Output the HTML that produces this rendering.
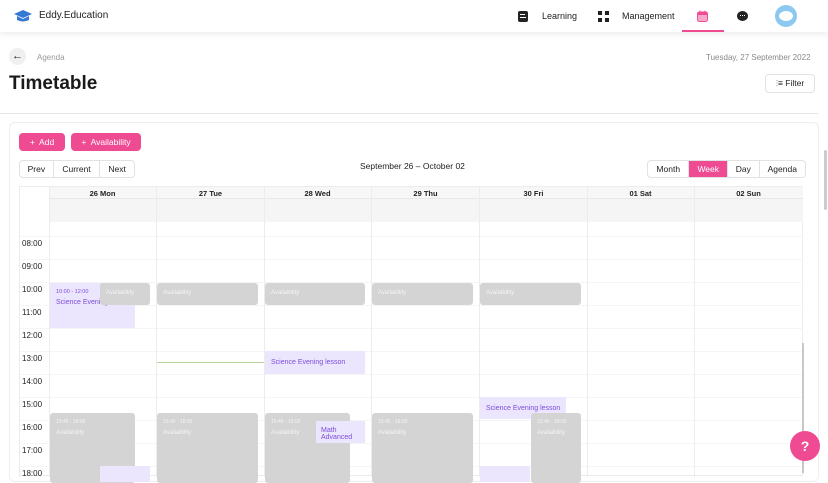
<!DOCTYPE html>
<html><head><style>
*{margin:0;padding:0;box-sizing:border-box}
body{width:828px;height:472px;overflow:hidden;background:#fff;font-family:"Liberation Sans",sans-serif;position:relative;color:#222}
.a{position:absolute}
.nav{left:0;top:0;width:828px;height:32px;background:#fff;box-shadow:0 2px 6px rgba(0,0,0,.08)}
.t{font-size:9px;color:#222}
.btn{background:#ee4b93;color:#fff;font-size:8.5px;border-radius:4px;display:flex;align-items:center;justify-content:center}
.grp{border:1px solid #e2e2e2;border-radius:4px;display:flex;font-size:8.5px;background:#fff}
.grp div{display:flex;align-items:center;justify-content:center;border-right:1px solid #e2e2e2}
.grp div:last-child{border-right:none}
.vl{width:1px;background:#ececec}
.hl{height:1px;background:#f5f5f5;left:20px;width:783px}
.hd{font-size:7.5px;font-weight:bold;text-align:center;top:188px;height:12px;line-height:12px}
.tm{font-size:8px;color:#222;left:22px}
.av{background:#d4d4d4;border-radius:3px;color:#f4f4f4;font-size:6px;padding:7px 6px;white-space:nowrap;overflow:hidden}
.pu{background:#ebe5fd;color:#7c4ddb;font-size:7px;padding:8px 6px;white-space:nowrap;overflow:hidden}
</style></head><body>
<div class="a nav"></div>
<svg class="a" style="left:13px;top:9px" width="20" height="14" viewBox="0 0 20 14"><path d="M10 1 L19 5 L10 9 L1 5Z" fill="#3478d4"/><path d="M4 7 v4 q6 3 12 0 v-4 l-6 3z" fill="#3478d4"/></svg>
<div class="a" style="left:39px;top:10px;font-size:10px;color:#222">Eddy.Education</div>
<div class="a" style="left:518px;top:11px;width:10px;height:11px;background:#222;border-radius:2px"></div>
<div class="a" style="left:520px;top:14px;width:5px;height:1px;background:#fff"></div><div class="a" style="left:520px;top:17px;width:6px;height:1px;background:#fff"></div>
<div class="a t" style="left:542px;top:11px">Learning</div>
<div class="a" style="left:598px;top:11px;width:4px;height:4px;background:#222;box-shadow:7px 0 #222,0 7px #222,7px 7px #222"></div>
<div class="a t" style="left:622px;top:11px">Management</div>
<svg class="a" style="left:697px;top:10px" width="11" height="12" viewBox="0 0 11 12"><rect x="0.5" y="2" width="10" height="9.5" rx="2" fill="#f6a8cb" stroke="#ee4b93"/><rect x="0.5" y="2" width="10" height="3" fill="#ee4b93"/><path d="M3 0.5v3M8 0.5v3" stroke="#ee4b93"/></svg>
<div class="a" style="left:682px;top:30px;width:42px;height:2px;background:#ee4b93"></div>
<div class="a" style="left:737px;top:11px;width:11px;height:10px;background:#222;border-radius:50%"></div>
<div class="a" style="left:740px;top:15px;width:1px;height:1px;background:#fff;box-shadow:2px 0 #fff,4px 0 #fff"></div>
<div class="a" style="left:775px;top:5px;width:22px;height:22px;background:#8cc8f0;border-radius:50%"></div>
<div class="a" style="left:779px;top:11px;width:14px;height:10px;background:#fff;border-radius:50%"></div>
<div class="a" style="left:9px;top:48px;width:17px;height:17px;background:#f0f0f0;border-radius:50%;font-size:11px;text-align:center;line-height:17px;font-weight:bold">←</div>
<div class="a" style="left:37px;top:53px;font-size:8px;color:#999">Agenda</div>
<div class="a" style="left:706px;top:53px;font-size:8px;color:#888">Tuesday, 27 September 2022</div>
<div class="a" style="left:9px;top:73px;font-size:19px;font-weight:bold;color:#1a1a1a">Timetable</div>
<div class="a" style="left:765px;top:74px;width:50px;height:19px;border:1px solid #e2e2e2;border-radius:4px;font-size:8.5px;text-align:center;line-height:17px">⫶≡ Filter</div>
<div class="a" style="left:0;top:113px;width:818px;height:1px;background:#e6e6e6"></div>
<div class="a" style="left:9px;top:122px;width:810px;height:360px;border:1px solid #eee;border-radius:6px"></div>
<div class="a btn" style="left:19px;top:133px;width:46px;height:18px">+&nbsp; Add</div>
<div class="a btn" style="left:71px;top:133px;width:70px;height:18px">+&nbsp; Availability</div>
<div class="a grp" style="left:19px;top:160px;width:116px;height:18px"><div style="width:34px">Prev</div><div style="width:47px">Current</div><div style="width:34px">Next</div></div>
<div class="a" style="left:360px;top:161px;font-size:8.5px">September 26 – October 02</div>
<div class="a grp" style="left:647px;top:160px;width:159px;height:18px"><div style="width:42px">Month</div><div style="width:39px;background:#ee4b93;color:#fff">Week</div><div style="width:32px">Day</div><div style="width:46px">Agenda</div></div>
<div class="a" style="left:19px;top:186px;width:784px;height:290px;border:1px solid #ececec"></div>
<div class="a" style="left:49px;top:187px;width:754px;height:12px;background:#f7f7f7;border-bottom:1px solid #e8e8e8"></div>
<div class="a" style="left:49px;top:199px;width:754px;height:23px;background:#f5f5f5"></div>
<div class="a hl" style="top:236px"></div><div class="a hl" style="top:259px"></div><div class="a hl" style="top:282px"></div><div class="a hl" style="top:305px"></div><div class="a hl" style="top:328px"></div><div class="a hl" style="top:351px"></div><div class="a hl" style="top:374px"></div><div class="a hl" style="top:397px"></div><div class="a hl" style="top:420px"></div><div class="a hl" style="top:443px"></div><div class="a hl" style="top:466px"></div>
<div class="a vl" style="left:49px;top:187px;height:290px"></div><div class="a vl" style="left:156px;top:187px;height:290px"></div><div class="a vl" style="left:264px;top:187px;height:290px"></div><div class="a vl" style="left:371px;top:187px;height:290px"></div><div class="a vl" style="left:479px;top:187px;height:290px"></div><div class="a vl" style="left:587px;top:187px;height:290px"></div><div class="a vl" style="left:694px;top:187px;height:290px"></div>
<div class="a hd" style="left:49px;width:107px">26 Mon</div><div class="a hd" style="left:157px;width:107px">27 Tue</div><div class="a hd" style="left:264px;width:107px">28 Wed</div><div class="a hd" style="left:372px;width:107px">29 Thu</div><div class="a hd" style="left:480px;width:107px">30 Fri</div><div class="a hd" style="left:587px;width:107px">01 Sat</div><div class="a hd" style="left:695px;width:107px">02 Sun</div>
<div class="a tm" style="top:239px">08:00</div><div class="a tm" style="top:262px">09:00</div><div class="a tm" style="top:285px">10:00</div><div class="a tm" style="top:308px">11:00</div><div class="a tm" style="top:331px">12:00</div><div class="a tm" style="top:354px">13:00</div><div class="a tm" style="top:377px">14:00</div><div class="a tm" style="top:400px">15:00</div><div class="a tm" style="top:423px">16:00</div><div class="a tm" style="top:446px">17:00</div><div class="a tm" style="top:469px">18:00</div>
<div class="a pu" style="left:50px;top:283px;width:85px;height:45px;padding-top:6px"><div style="font-size:5.5px">10:00 - 12:00</div><div style="margin-top:4px">Science Evening lesson</div></div>
<div class="a av" style="left:100px;top:283px;width:50px;height:22px">Availability</div>
<div class="a av" style="left:157px;top:283px;width:101px;height:22px">Availability</div>
<div class="a av" style="left:265px;top:283px;width:100px;height:22px">Availability</div>
<div class="a av" style="left:372px;top:283px;width:101px;height:22px">Availability</div>
<div class="a av" style="left:480px;top:283px;width:101px;height:22px">Availability</div>
<div class="a" style="left:157px;top:362px;width:107px;height:1px;background:#b6d19a"></div>
<div class="a pu" style="left:265px;top:351px;width:100px;height:23px">Science Evening lesson</div>
<div class="a pu" style="left:480px;top:397px;width:86px;height:22px">Science Evening lesson</div>
<div class="a av" style="left:50px;top:413px;width:85px;height:70px;padding-top:6px"><div style="font-size:5px">15:45 - 18:00</div><div style="margin-top:5px">Availability</div></div>
<div class="a av" style="left:157px;top:413px;width:101px;height:70px;padding-top:6px"><div style="font-size:5px">15:45 - 18:00</div><div style="margin-top:5px">Availability</div></div>
<div class="a av" style="left:265px;top:413px;width:85px;height:70px;padding-top:6px"><div style="font-size:5px">15:45 - 18:00</div><div style="margin-top:5px">Availability</div></div>
<div class="a av" style="left:372px;top:413px;width:101px;height:70px;padding-top:6px"><div style="font-size:5px">15:45 - 18:00</div><div style="margin-top:5px">Availability</div></div>
<div class="a av" style="left:531px;top:413px;width:50px;height:70px;padding-top:6px"><div style="font-size:5px">15:45 - 18:00</div><div style="margin-top:5px">Availability</div></div>
<div class="a pu" style="left:316px;top:421px;width:49px;height:22px;padding:6px 5px;line-height:7px;white-space:normal">Math Advanced</div>
<div class="a pu" style="left:100px;top:466px;width:50px;height:10px"></div>
<div class="a pu" style="left:480px;top:466px;width:50px;height:10px"></div>
<div class="a" style="left:802px;top:343px;width:2px;height:130px;background:#c8c8c8"></div>
<div class="a" style="left:824px;top:150px;width:3px;height:60px;background:#ccc;border-radius:2px"></div>
<div class="a" style="left:790px;top:431px;width:30px;height:30px;background:#ee4b93;border-radius:50%;color:#fff;font-weight:bold;font-size:14px;text-align:center;line-height:30px">?</div>
</body></html>
